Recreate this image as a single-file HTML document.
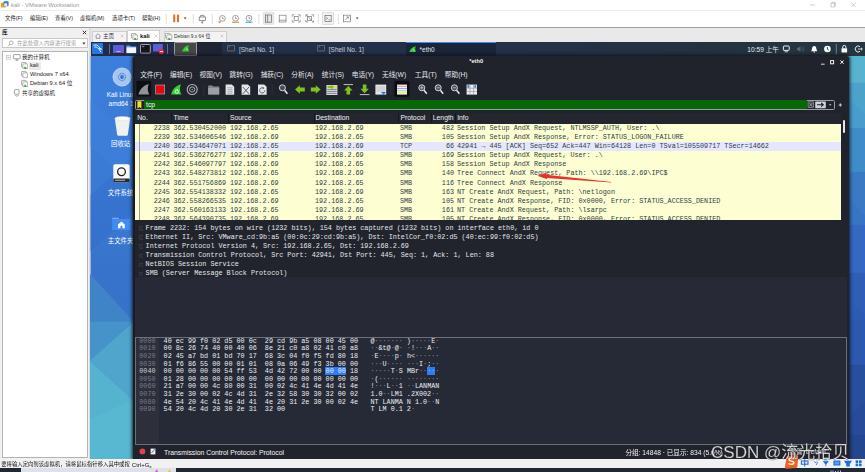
<!DOCTYPE html>
<html lang="zh"><head><meta charset="utf-8"><title>kali - VMware Workstation</title>
<style>
html,body{margin:0;padding:0;background:#fff;overflow:hidden;width:865px;height:472px;}
#root{position:relative;width:865px;height:472px;overflow:visible;background:#fff;font-family:"Liberation Sans","Noto Sans CJK SC",sans-serif;}
#root div,#root span,#root svg{position:absolute;box-sizing:border-box;}
.s{font-family:"Liberation Sans","Noto Sans CJK SC",sans-serif;white-space:pre;}
.m i{font-style:normal;opacity:0.5;}
.m{font-family:"Liberation Mono","Noto Sans CJK SC",monospace;white-space:pre;}
#root{filter:blur(0.45px);}
</style></head><body><div id="root">

<div style="left:0px;top:0px;width:865px;height:10.5px;background:#ffffff;"></div>
<svg style="left:1px;top:1px" width="8" height="8" viewBox="0 0 8 8"><rect x="0" y="1.5" width="5" height="5" rx="1" fill="#f59a23"/><rect x="2.6" y="0.3" width="5" height="5" rx="1" fill="#2d7fc1"/><rect x="3.2" y="2.2" width="3" height="3" rx="0.6" fill="#e8f0f8"/></svg>
<span class="s" style="left:11px;top:0.87px;font-size:5.9px;line-height:8.26px;color:#9a9a9a;">kali - VMware Workstation</span>
<svg style="left:805px;top:0" width="60" height="10" viewBox="0 0 60 10"><g stroke="#b0b0b0" stroke-width="0.6" fill="none"><path d="M5 5h5"/><rect x="26" y="3.2" width="3.4" height="3.8"/><path d="M27 3.2v-1h3.4v3.8h-1"/><path d="M46.5 2.6l4 4.4M50.5 2.6l-4 4.4"/></g></svg>
<div style="left:0px;top:10.3px;width:865px;height:0.6px;background:#ececec;"></div>
<div style="left:0px;top:11px;width:865px;height:16px;background:#ffffff;"></div>
<span class="s" style="left:5px;top:15.22px;font-size:5.4px;line-height:7.56px;color:#1a1a1a;">文件(F)</span>
<span class="s" style="left:30px;top:15.22px;font-size:5.4px;line-height:7.56px;color:#1a1a1a;">编辑(E)</span>
<span class="s" style="left:55px;top:15.22px;font-size:5.4px;line-height:7.56px;color:#1a1a1a;">查看(V)</span>
<span class="s" style="left:80px;top:15.22px;font-size:5.4px;line-height:7.56px;color:#1a1a1a;">虚拟机(M)</span>
<span class="s" style="left:112px;top:15.22px;font-size:5.4px;line-height:7.56px;color:#1a1a1a;">选项卡(T)</span>
<span class="s" style="left:142px;top:15.22px;font-size:5.4px;line-height:7.56px;color:#1a1a1a;">帮助(H)</span>
<svg style="left:160px;top:11px" width="210" height="16" viewBox="0 0 210 16">
<g fill="none" stroke-width="0.7">
<path d="M6.3 3v10M33.3 3v10M52.2 3v10M98.8 3v10M158.3 3v10M178.3 3v10" stroke="#d0d0d0"/>
<rect x="13.2" y="3.6" width="2" height="7.6" fill="#f26a21" stroke="none"/><rect x="17" y="3.6" width="2" height="7.6" fill="#f26a21" stroke="none"/>
<path d="M23.6 6.4h3l-1.5 1.8z" fill="#444" stroke="none"/>
<g stroke="#6a6a6a"><rect x="39.2" y="6" width="6.2" height="3.6"/><path d="M40.6 6v-1.6h3.4v1.6M42.3 9.6v2.4M41 11l1.3 1.2 1.3-1.2"/></g>
<g stroke="#7a7a7a"><circle cx="62.400" cy="7.400" r="2.900"/><path d="M62.400 5.800v1.800h1.400"/></g><path d="M58.600 10.600l2 .2-1.400 1.200z" fill="#f26a21" stroke="#f26a21" stroke-width="0.500"/>
<g stroke="#7a7a7a"><circle cx="75.5" cy="7.2" r="2.9"/><path d="M75.5 5.6v1.8h1.4"/></g><path d="M72 11.2h7" stroke="#f26a21" stroke-width="1"/>
<g stroke="#7a7a7a"><circle cx="89" cy="7.2" r="2.9"/><path d="M89 5.6v1.8h1.4"/></g><path d="M85.5 11.2h7" stroke="#1d9bd8" stroke-width="1"/>
<rect x="103.200" y="1.200" width="10.600" height="12.200" rx="0.800" fill="#e6e6e6" stroke="#d4d4d4" stroke-width="0.500"/>
<g stroke="#6a6a6a"><rect x="105.400" y="4" width="6.200" height="7.200"/><path d="M107.600 4v7.200"/></g>
<g stroke="#7a7a7a" transform="translate(1.200,0)"><rect x="118" y="4.200" width="6.800" height="6.800"/><path d="M118 9.200h6.800"/></g>
<g stroke="#7a7a7a" transform="translate(1.400,0)"><rect x="132.800" y="5.400" width="4" height="4"/><path d="M130.800 5.800v-2h2.200M138.800 5.800v-2h-2.200M130.800 9v2h2.200M138.800 9v2h-2.200"/></g>
<g stroke="#7a7a7a" transform="translate(1.200,0)"><rect x="146.400" y="5.400" width="4" height="4"/><path d="M145 3.800l7 7.400"/><path d="M144.600 5.800v-2h2.200M152.400 5.800v-2h-2.200M144.600 9v2h2.200M152.400 9.600v1.400h-1.400"/></g>
<rect x="162.6" y="1.6" width="11" height="12" fill="#f2f2f2" stroke="#c8c8c8" stroke-width="0.5"/>
<g stroke="#6a6a6a"><rect x="165" y="4.4" width="6.2" height="6"/><path d="M166.2 6.4l1.4 1-1.4 1M168.6 8.8h1.6"/></g>
<g stroke="#7a7a7a"><rect x="183.4" y="4.2" width="7" height="6.6"/><path d="M185.4 8.8l3-3M186.6 5.8h1.8v1.8"/></g>
<path d="M195.800 6.600h2.800l-1.400 1.700z" fill="#444" stroke="none"/>
</g></svg>
<div style="left:-6px;top:26.6px;width:880px;height:0.9px;background:#9c9c9c;"></div>
<div style="left:-6px;top:27.5px;width:880px;height:14.5px;background:#e9e9e9;"></div>
<div style="left:-6px;top:27.5px;width:94.6px;height:432px;background:#f0f0f0;"></div>
<div style="left:88.6px;top:27.5px;width:2.1px;height:432px;background:#dcdcdc;"></div>
<span class="s" style="left:2px;top:28.68px;font-size:5.6px;line-height:7.84px;color:#222;font-weight:bold;">库</span>
<svg style="left:81.5px;top:30px" width="5" height="5" viewBox="0 0 5 5"><path d="M0.8 0.8l3.4 3.4M4.2 0.8l-3.4 3.4" stroke="#222" stroke-width="0.9" fill="none"/></svg>
<div style="left:2.3px;top:38.4px;width:85.4px;height:9.6px;background:#ffffff;border:0.6px solid #c8c8c8;"></div>
<svg style="left:6.5px;top:40px" width="7" height="7" viewBox="0 0 7 7"><circle cx="4.2" cy="2.8" r="1.9" fill="none" stroke="#8a8a8a" stroke-width="0.6"/><path d="M2.8 4.2L0.8 6.3" stroke="#8a8a8a" stroke-width="0.7"/></svg>
<span class="s" style="left:17px;top:39.52px;font-size:5.4px;line-height:7.56px;color:#a0a0a0;">在此处键入内容进行搜索</span>
<svg style="left:82px;top:42px" width="4" height="3" viewBox="0 0 4 3"><path d="M0.3 0.4h3.2l-1.6 2z" fill="#333"/></svg>
<div style="left:2.2px;top:51.2px;width:85.5px;height:406.8px;background:#ffffff;border:0.7px solid #b4b4b4;"></div>
<svg style="left:5.5px;top:54.5px" width="5" height="5" viewBox="0 0 5 5"><rect x="0.4" y="0.4" width="4" height="4" fill="#fff" stroke="#aaa" stroke-width="0.5"/><path d="M1.3 2.4h2.2" stroke="#555" stroke-width="0.5"/></svg>
<svg style="left:12.5px;top:53.5px" width="8" height="7" viewBox="0 0 8 7"><rect x="0.6" y="0.6" width="6.6" height="4.2" rx="0.5" fill="#fff" stroke="#666" stroke-width="0.6"/><path d="M2.4 6.2h3M3.9 4.8v1.4" stroke="#666" stroke-width="0.6"/></svg>
<span class="s" style="left:22px;top:53.85px;font-size:5.5px;line-height:7.7px;color:#222;">我的计算机</span>
<div style="left:29.2px;top:61.8px;width:11.6px;height:8.2px;background:#ececec;"></div>
<svg style="left:20.6px;top:61.8px" width="7.5" height="7.5" viewBox="0 0 7.5 7.5"><rect x="0.5" y="0.5" width="4.6" height="4.6" rx="0.4" fill="#fff" stroke="#777" stroke-width="0.55"/><rect x="1.9" y="1.9" width="4.8" height="4.8" rx="0.4" fill="#fff" stroke="#777" stroke-width="0.55"/><path d="M3.4 4.6l2.6 1.4-2.6 1.4z" fill="#1fa81f"/></svg>
<span class="s" style="left:30px;top:62.11px;font-size:5.7px;line-height:7.98px;color:#222;">kali</span>
<svg style="left:20.6px;top:70.8px" width="7.5" height="7.5" viewBox="0 0 7.5 7.5"><rect x="0.5" y="0.5" width="4.6" height="4.6" rx="0.4" fill="#fff" stroke="#777" stroke-width="0.55"/><rect x="1.9" y="1.9" width="4.8" height="4.8" rx="0.4" fill="#fff" stroke="#777" stroke-width="0.55"/></svg>
<span class="s" style="left:30px;top:71.21px;font-size:5.7px;line-height:7.98px;color:#222;">Windows 7 x64</span>
<svg style="left:20.6px;top:79.8px" width="7.5" height="7.5" viewBox="0 0 7.5 7.5"><rect x="0.5" y="0.5" width="4.6" height="4.6" rx="0.4" fill="#fff" stroke="#777" stroke-width="0.55"/><rect x="1.9" y="1.9" width="4.8" height="4.8" rx="0.4" fill="#fff" stroke="#777" stroke-width="0.55"/><path d="M3.4 4.6l2.6 1.4-2.6 1.4z" fill="#1fa81f"/></svg>
<span class="s" style="left:30px;top:80.21px;font-size:5.7px;line-height:7.98px;color:#222;">Debian 9.x 64 位</span>
<svg style="left:12.5px;top:88.8px" width="8" height="8" viewBox="0 0 8 8"><rect x="1.4" y="0.6" width="4.6" height="4.6" rx="0.8" fill="#fff" stroke="#666" stroke-width="0.6"/><path d="M2.2 6.2c0 1 2.6 1.2 3.6 0" stroke="#666" stroke-width="0.6" fill="none"/></svg>
<span class="s" style="left:22px;top:89.65px;font-size:5.5px;line-height:7.7px;color:#222;">共享的虚拟机</span>
<div style="left:92.3px;top:30.8px;width:34.4px;height:11.2px;background:#f3f3f3;border:0.6px solid #cfcfcf;border-bottom:none;"></div>
<svg style="left:95px;top:33px" width="6" height="6" viewBox="0 0 6 6"><path d="M0.5 3L3 0.7 5.5 3M1.2 2.6v2.8h3.6V2.6" fill="none" stroke="#666" stroke-width="0.6"/></svg>
<span class="s" style="left:103px;top:33.18px;font-size:5.6px;line-height:7.84px;color:#333;">主页</span>
<svg style="left:119.5px;top:34.4px" width="4" height="4" viewBox="0 0 4 4"><path d="M0.5 0.5l3 3M3.5 0.5l-3 3" stroke="#b8b8b8" stroke-width="0.6" fill="none"/></svg>
<div style="left:127px;top:30px;width:33.2px;height:12px;background:#ffffff;border:0.6px solid #cfcfcf;border-bottom:none;"></div>
<svg style="left:130.6px;top:32.8px" width="7.5" height="7.5" viewBox="0 0 7.5 7.5"><rect x="0.5" y="0.5" width="4.6" height="4.6" rx="0.4" fill="#fff" stroke="#777" stroke-width="0.55"/><rect x="1.9" y="1.9" width="4.8" height="4.8" rx="0.4" fill="#fff" stroke="#777" stroke-width="0.55"/><path d="M3.4 4.6l2.6 1.4-2.6 1.4z" fill="#1fa81f"/></svg>
<span class="s" style="left:140px;top:32.34px;font-size:5.8px;line-height:8.12px;color:#111;font-weight:bold;">kali</span>
<svg style="left:153.6px;top:34.4px" width="4" height="4" viewBox="0 0 4 4"><path d="M0.5 0.5l3 3M3.5 0.5l-3 3" stroke="#b8b8b8" stroke-width="0.6" fill="none"/></svg>
<div style="left:163.8px;top:30.8px;width:62.8px;height:11.2px;background:#f3f3f3;border:0.6px solid #cfcfcf;border-bottom:none;"></div>
<svg style="left:165.2px;top:32.8px" width="7.5" height="7.5" viewBox="0 0 7.5 7.5"><rect x="0.5" y="0.5" width="4.6" height="4.6" rx="0.4" fill="#fff" stroke="#777" stroke-width="0.55"/><rect x="1.9" y="1.9" width="4.8" height="4.8" rx="0.4" fill="#fff" stroke="#777" stroke-width="0.55"/><path d="M3.4 4.6l2.6 1.4-2.6 1.4z" fill="#1fa81f"/></svg>
<span class="s" style="left:174.2px;top:32.98px;font-size:5.6px;line-height:7.84px;color:#333;transform:scaleX(0.87);transform-origin:0 50%;">Debian 9.x 64 位</span>
<svg style="left:219.6px;top:34.4px" width="4" height="4" viewBox="0 0 4 4"><path d="M0.5 0.5l3 3M3.5 0.5l-3 3" stroke="#b8b8b8" stroke-width="0.6" fill="none"/></svg>
<div style="left:90.6px;top:42px;width:774.4px;height:14.2px;background:#1f2435;"></div>
<div style="left:90.6px;top:42px;width:106.4px;height:14.2px;background:#222c48;"></div>
<div style="left:222px;top:42px;width:184.4px;height:14.2px;background:#233049;"></div>
<div style="left:406.4px;top:42px;width:90px;height:14.2px;background:#1b2438;border-top:1.6px solid #3b8eea;"></div>
<div style="left:496.4px;top:42px;width:374.6px;height:14.2px;background:linear-gradient(90deg,#233049 0%,#24323f 60%,#26363f 100%);"></div>
<svg style="left:91.8px;top:42.8px" width="11.2" height="11.4" viewBox="0 0 11.2 11.4"><rect width="11.2" height="11.4" rx="1" fill="#2577e6"/><path d="M1.6 2.4c2-.9 4.4-.2 5.4 1.4.9 1.5 1.6 2 2.6 2.4-1.2.2-2.4-.4-3-1.2.4 1.2 1.2 2.6 2.4 4.2M2.4 4.2c1.4-.6 3 .2 3.6 1.2" fill="none" stroke="#fff" stroke-width="0.9"/></svg>
<div style="left:109px;top:44px;width:0.7px;height:10.4px;background:#6a7080;"></div>
<svg style="left:112.6px;top:44.6px" width="11" height="9" viewBox="0 0 11 9"><defs><linearGradient id="g1" x1="0" y1="0" x2="1" y2="1"><stop offset="0" stop-color="#3a6be0"/><stop offset="1" stop-color="#8a4bd0"/></linearGradient></defs><rect width="11" height="8" rx="0.6" fill="url(#g1)"/><rect x="3.5" y="6.2" width="4" height="0.7" fill="#cfd6f5"/></svg>
<svg style="left:126.4px;top:44.2px" width="10.6" height="9.6" viewBox="0 0 10.6 9.6"><path d="M0.3 1.6h3.6l1 1h5.4v6.6h-10z" fill="#5aa2f0"/><rect x="0.6" y="3.4" width="9.4" height="5.6" fill="#f4f6fa"/></svg>
<svg style="left:139.8px;top:44.2px" width="10.8" height="9.6" viewBox="0 0 10.8 9.6"><rect x="0.5" y="0.5" width="9.8" height="8.6" rx="0.8" fill="#14161c" stroke="#c8c8c8" stroke-width="0.8"/><path d="M2 2.6h2.4" stroke="#ddd" stroke-width="0.6"/></svg>
<svg style="left:153.2px;top:44.2px" width="11.4" height="10.6" viewBox="0 0 11.4 10.6"><rect width="9.8" height="7.6" rx="0.6" fill="url(#g1)"/><circle cx="8.4" cy="7.6" r="2.7" fill="#e8252c"/><rect x="6.8" y="7.1" width="3.2" height="1" fill="#fff"/></svg>
<div style="left:167.4px;top:44px;width:0.7px;height:10.4px;background:#6a7080;"></div>
<div style="left:174.2px;top:42.2px;width:22.8px;height:13.4px;background:#474747;border:0.7px solid #9c9c9c;border-radius:1px;"></div>
<svg style="left:181.6px;top:45.4px" width="7.4" height="6.6" viewBox="0 0 10 9"><path d="M0.2 8.8C1.2 4.4 4.4 1 9.4 0.2 8 2.6 8.2 6 9.8 8.8z" fill="#2ed12e"/><path d="M5.2 6.4l1.4-1.4 1.2 1.6" stroke="#e8ffe8" stroke-width="0.9" fill="none"/></svg>
<svg style="left:227px;top:45.4px" width="8" height="6.4" viewBox="0 0 8 6.4"><rect x="0.4" y="0.4" width="7.2" height="5.6" rx="0.5" fill="#2a3040" stroke="#7d8596" stroke-width="0.7"/><path d="M1.6 2h1.6" stroke="#aab" stroke-width="0.5"/></svg>
<span class="s" style="left:239px;top:44.98px;font-size:6.45px;line-height:9.03px;color:#ccd0d8;">[Shell No. 1]</span>
<svg style="left:317.4px;top:45.4px" width="8" height="6.4" viewBox="0 0 8 6.4"><rect x="0.4" y="0.4" width="7.2" height="5.6" rx="0.5" fill="#2a3040" stroke="#7d8596" stroke-width="0.7"/><path d="M1.6 2h1.6" stroke="#aab" stroke-width="0.5"/></svg>
<span class="s" style="left:328.8px;top:44.98px;font-size:6.45px;line-height:9.03px;color:#ccd0d8;">[Shell No. 1]</span>
<svg style="left:408.6px;top:45.6px" width="7.4" height="6.4" viewBox="0 0 10 9"><path d="M0.2 8.8C1.2 4.4 4.4 1 9.4 0.2 8 2.6 8.2 6 9.8 8.8z" fill="#2ed12e"/><path d="M5.2 6.4l1.4-1.4 1.2 1.6" stroke="#e8ffe8" stroke-width="0.9" fill="none"/></svg>
<span class="s" style="left:419.6px;top:44.98px;font-size:6.45px;line-height:9.03px;color:#e4e8f0;">*eth0</span>
<span class="s" style="left:747.3px;top:44.78px;font-size:6.6px;line-height:9.24px;color:#e8ecf0;">10:59 上午</span>
<svg style="left:780px;top:43px" width="85" height="12" viewBox="0 0 85 12">
<rect x="3.4" y="3" width="5.8" height="4.4" rx="0.6" fill="none" stroke="#f0f0f0" stroke-width="1"/><path d="M4.6 8.8h3.4" stroke="#f0f0f0" stroke-width="0.8"/>
<path d="M17.2 4.8h1.4l1.8-1.6v5.6l-1.8-1.6h-1.4z" fill="#5d6a74"/><path d="M21.6 4.2c.8 1 .8 2.6 0 3.600M22.800 3.200c1.400 1.600 1.400 4 0 5.600" fill="none" stroke="#5d6a74" stroke-width="0.5"/>
<path d="M31.200 8.200c1-1 .6-3.600 1.600-4.600.8-.8 2-.8 2.800 0 1 1 .6 3.600 1.600 4.600z" fill="#fff"/><circle cx="34.200" cy="9" r="0.700" fill="#fff"/>
<circle cx="47.400" cy="6" r="3.300" fill="#fff"/><path d="M47.400 4v2.200l1.500 1" stroke="#24333f" stroke-width="0.9" fill="none"/>
<path d="M56.300 1v10.400" stroke="#9aa4ae" stroke-width="0.700"/>
<rect x="61.500" y="5.200" width="5.600" height="4.200" rx="0.500" fill="#fff"/><path d="M62.700 5.200v-1.200a1.600 1.600 0 0 1 3.200 0v1.200" fill="none" stroke="#fff" stroke-width="0.900"/>
<path d="M80 3.600a3 3 0 1 0 0 4.800" fill="none" stroke="#fff" stroke-width="0.9"/><path d="M78 6h4.200M81 4.800l1.300 1.200-1.300 1.200" stroke="#fff" stroke-width="0.8" fill="none"/>
</svg>
<svg style="left:90.200px;top:56.200px" width="780.800" height="403" viewBox="90.200 56.200 780.800 403" preserveAspectRatio="none">
<defs>
<linearGradient id="dl" x1="0" y1="0" x2="0" y2="1"><stop offset="0" stop-color="#3b7fda"/><stop offset="0.400" stop-color="#3a79d3"/><stop offset="0.520" stop-color="#3773ca"/><stop offset="1" stop-color="#3670c6"/></linearGradient>
</defs>
<rect x="90.600" y="56" width="60" height="404" fill="url(#dl)"/><rect x="88" y="56" width="2.600" height="404" fill="#dcdcdc"/>
<path d="M90 100l44 40v46l-44-40z" fill="#4585e0" opacity="0.300"/>
<path d="M90 196l44-40v56l-44 40z" fill="#2f68c2" opacity="0.300"/>
<path d="M90 274L134 322V460H90z" fill="#4084c8"/>
<path d="M90 322H134L90 361z" fill="#4692ca"/>
<path d="M134 322V401L90 361z" fill="#4fa5cc"/>
<path d="M90 361L134 401V460H90z" fill="#56b3cf"/>
<path d="M90 420L134 400V460H90z" fill="#5abad1" opacity="0.700"/>
<rect x="840" y="56" width="32" height="27" fill="#56b4cf"/>
<rect x="840" y="82.500" width="32" height="46" fill="#4ba3cc"/>
<rect x="840" y="128" width="32" height="45" fill="#3f8cc8"/>
<rect x="840" y="172" width="32" height="54" fill="#3a7ac4"/>
<rect x="840" y="225" width="32" height="49" fill="#3468c2"/>
<rect x="840" y="273" width="32" height="48" fill="#2f5eb6"/>
<rect x="840" y="320" width="32" height="46" fill="#2c58b0"/>
<rect x="840" y="365" width="32" height="71" fill="#284f9e"/>
<rect x="840" y="435" width="32" height="25" fill="#24468e"/>
<path d="M849 100l16 14v14h-16z" fill="#4797ca" opacity="0.600"/>
<path d="M849 200l16 16v9h-16z" fill="#3570c3" opacity="0.600"/>
<path d="M849 300l16 14v6h-16z" fill="#2d5ab2" opacity="0.600"/>
<path d="M849 418l16-16v33h-16z" fill="#264a96" opacity="0.600"/>
</svg>
<svg style="left:111.800px;top:66.600px" width="20" height="20" viewBox="0 0 20 20"><circle cx="10" cy="10" r="9.300" fill="#a6c6f2"/><circle cx="10" cy="10" r="9" fill="none" stroke="#bdd5f6" stroke-width="0.700"/><circle cx="10" cy="10" r="4.400" fill="#9abdee"/><circle cx="10" cy="10" r="3.600" fill="none" stroke="#4a78c4" stroke-width="0.900" stroke-dasharray="1.600 0.800"/><circle cx="10" cy="10" r="1.900" fill="#3a74d8"/></svg>
<span class="s" style="left:106.8px;top:91.22px;font-size:6.4px;line-height:8.96px;color:#ffffff;">Kali Linux</span>
<span class="s" style="left:108.6px;top:100.32px;font-size:6.4px;line-height:8.96px;color:#ffffff;">amd64 1</span>
<svg style="left:113.500px;top:116px" width="17" height="20" viewBox="0 0 17 20"><path d="M0.800 2.400h15.400l-2.400 16.400c-.2.800-.8 1-1.400 1h-7.800c-.6 0-1.200-.2-1.400-1z" fill="#eef0f2"/><ellipse cx="8.500" cy="2.600" rx="7.700" ry="2.200" fill="#fafbfc" stroke="#d4d8dc" stroke-width="0.500"/></svg>
<span class="s" style="left:111px;top:140.22px;font-size:6.4px;line-height:8.96px;color:#ffffff;">回收站</span>
<svg style="left:113.200px;top:164.400px" width="17" height="18.600" viewBox="0 0 17 18.600"><rect x="0.300" y="0.300" width="16.400" height="18" rx="1.600" fill="#fbfbfb"/><rect x="0.300" y="14.600" width="16.400" height="3.700" rx="1" fill="#2a2c30"/><circle cx="8.500" cy="7.800" r="3.900" fill="none" stroke="#222" stroke-width="1.300"/><rect x="2" y="15.800" width="10" height="0.800" fill="#ddd"/></svg>
<span class="s" style="left:107.8px;top:188.72px;font-size:6.4px;line-height:8.96px;color:#ffffff;">文件系统</span>
<svg style="left:112px;top:216.600px" width="18.800" height="13.600" viewBox="0 0 18.800 13.600"><path d="M0.200 0.800h6l1 1.200h11.400v11.400h-18.400z" fill="#3f8cf3"/><path d="M0.200 0.800h6l1 1.200h-7z" fill="#6aa8f8"/><path d="M9.400 4.400l3.400 3v3.800h-2.400v-2.400h-2v2.400h-2.400v-3.800z" fill="#fff"/></svg>
<span class="s" style="left:107.8px;top:237.32px;font-size:6.4px;line-height:8.96px;color:#ffffff;">主文件夹</span>
<div style="left:132.8px;top:56.2px;width:716.0px;height:402.8px;background:#20232c;border-radius:3px 3px 0 0;box-shadow:0 0 3.5px 0.8px rgba(10,14,24,0.85);"></div>
<div style="left:132.8px;top:58px;width:2.3px;height:401px;background:#1b1c21;"></div>
<span class="s" style="left:469.2px;top:58.41px;font-size:5.7px;line-height:7.98px;color:#f0f0f0;font-weight:bold;">*eth0</span>
<svg style="left:818px;top:58px" width="30" height="8" viewBox="0 0 30 8"><g stroke="#f4f4f4" fill="none"><path d="M3 6.200h3.600" stroke-width="0.900"/><rect x="12.600" y="2.600" width="3" height="3.200" stroke-width="1"/><path d="M22.400 2.400l3.200 3.400M25.600 2.400l-3.200 3.400" stroke-width="1"/></g></svg>
<span class="s" style="left:140.2px;top:70.11px;font-size:6.7px;line-height:9.38px;color:#e8e8ec;">文件(F)</span>
<span class="s" style="left:170px;top:70.11px;font-size:6.7px;line-height:9.38px;color:#e8e8ec;">编辑(E)</span>
<span class="s" style="left:199.6px;top:70.11px;font-size:6.7px;line-height:9.38px;color:#e8e8ec;">视图(V)</span>
<span class="s" style="left:229.6px;top:70.11px;font-size:6.7px;line-height:9.38px;color:#e8e8ec;">跳转(G)</span>
<span class="s" style="left:260.7px;top:70.11px;font-size:6.7px;line-height:9.38px;color:#e8e8ec;">捕获(C)</span>
<span class="s" style="left:291.3px;top:70.11px;font-size:6.7px;line-height:9.38px;color:#e8e8ec;">分析(A)</span>
<span class="s" style="left:321.8px;top:70.11px;font-size:6.7px;line-height:9.38px;color:#e8e8ec;">统计(S)</span>
<span class="s" style="left:351.8px;top:70.11px;font-size:6.7px;line-height:9.38px;color:#e8e8ec;">电话(Y)</span>
<span class="s" style="left:382px;top:70.11px;font-size:6.7px;line-height:9.38px;color:#e8e8ec;">无线(W)</span>
<span class="s" style="left:414.8px;top:70.11px;font-size:6.7px;line-height:9.38px;color:#e8e8ec;">工具(T)</span>
<span class="s" style="left:444.8px;top:70.11px;font-size:6.7px;line-height:9.38px;color:#e8e8ec;">帮助(H)</span>
<svg style="left:134px;top:80px" width="350" height="18" viewBox="0 -2 350 18">
<rect x="2.400" y="-1.200" width="14.800" height="15.600" rx="1.400" fill="#0d0e12"/>
<path d="M4.400 12.600C5.800 7.600 9 3.400 14.800 2 13.200 5.200 13.400 9.400 15.400 12.600z" fill="#8f9297"/>
<rect x="21.700" y="3" width="9" height="9" fill="#e00a12" stroke="#b8babd" stroke-width="0.600"/>
<path d="M37.200 12.600C38.200 7.400 41.400 3.600 47 2.400 45.400 5.400 45.600 9.400 47.600 12.600z" fill="#2fd32f"/><circle cx="42.800" cy="9.600" r="1.700" fill="none" stroke="#f0fff0" stroke-width="0.900"/><path d="M42.800 6.800v2l1.400-1z" fill="#f0fff0"/>
<circle cx="58.200" cy="7.500" r="5" fill="none" stroke="#b4b6ba" stroke-width="1.100"/><circle cx="58.200" cy="7.500" r="2.600" fill="none" stroke="#b4b6ba" stroke-width="1"/><circle cx="58.200" cy="7.500" r="0.700" fill="#b4b6ba"/>
<path d="M69.600 2v11" stroke="#343741" stroke-width="0.600"/>
<path d="M74.200 3.400h4l1 1.200h6v7.800h-11z" fill="#85888d"/><rect x="74.200" y="6" width="11" height="6.400" fill="#9c9fa4"/>
<path d="M91.600 2.400h6.200l2.400 2.400v8h-8.600z" fill="#e4e5e7"/><path d="M92.800 5.600h6M92.800 7.600h6M92.800 9.600h6M92.800 11.400h6M95 5.600v6M97.200 5.600v6" stroke="#9a9da2" stroke-width="0.500"/>
<path d="M107.600 2.400h6.200l2.400 2.400v8h-8.600z" fill="#e4e5e7"/><path d="M108.800 5l6.200 6.800M115 5l-6.200 6.800" stroke="#4d5056" stroke-width="0.900"/>
<path d="M124 2.400h6.200l2.400 2.400v8h-8.600z" fill="#e4e5e7"/><path d="M130.800 8.400a2.600 2.600 0 1 1-1.200-2.200" fill="none" stroke="#5a5d63" stroke-width="1"/><path d="M128.600 4.800l1.800 1.200-1.600 1.200z" fill="#5a5d63"/>
<path d="M138.200 2v11" stroke="#343741" stroke-width="0.600"/>
<circle cx="148.400" cy="5.800" r="3" fill="#4a4d55" stroke="#d4d6da" stroke-width="1"/><path d="M150.600 8.200l2.800 3.600" stroke="#e8e8e8" stroke-width="1.500"/>
<path d="M161 7.500l4.800-4.200v2.300h5v3.800h-5v2.300z" fill="#7fc21f"/>
<path d="M186.600 7.500l-4.800-4.200v2.300h-5v3.800h5v2.300z" fill="#7fc21f"/>
<rect x="192.400" y="3" width="11" height="10" fill="#d4d6da"/><path d="M193.200 7.400h9.400M193.200 9.400h9.400M193.200 11.400h9.400" stroke="#5d6066" stroke-width="0.700"/><path d="M200.200 5l-3.200-2.600v1.500h-3.400v2.200h3.400v1.500z" fill="#7fc21f"/><rect x="200.600" y="4" width="2.400" height="1.600" fill="#f2d21a"/>
<path d="M209.600 2.600h9.400" stroke="#d0d2d6" stroke-width="0.900"/><path d="M214.300 4l4.200 4.400h-2.400v4.200h-3.600v-4.200h-2.400z" fill="#7fc21f"/>
<path d="M225.800 12.600h9.600" stroke="#d0d2d6" stroke-width="0.900"/><path d="M230.600 11.200l4.200-4.400h-2.400v-4.200h-3.600v4.200h-2.400z" fill="#7fc21f"/>
<rect x="241.400" y="2.600" width="10.800" height="10" fill="#e4e6e9"/><path d="M242.400 5h8.800M242.400 7h8.800M242.400 9h8.800" stroke="#a4a7ad" stroke-width="0.600"/><path d="M247 10h5l-2.500 3z" fill="#2c78e4"/>
<path d="M257 2v11" stroke="#343741" stroke-width="0.600"/>
<rect x="260.400" y="-1.200" width="15" height="16" rx="1.400" fill="#0b0c10"/>
<rect x="263" y="2.600" width="10" height="10" fill="#f4f4f4"/><path d="M263 4.300h10" stroke="#f08cc0" stroke-width="1.100"/><path d="M263 6.500h10" stroke="#8fa8f0" stroke-width="1.100"/><path d="M263 8.700h10" stroke="#9fe08a" stroke-width="1.100"/><path d="M263 10.900h10" stroke="#f2e27a" stroke-width="1.100"/>
<g fill="#4a4d55" stroke="#d4d6da" stroke-width="1"><circle cx="287.800" cy="5.800" r="3"/><circle cx="304.200" cy="5.800" r="3"/><circle cx="320.400" cy="5.800" r="3"/></g>
<g stroke="#e8e8e8" stroke-width="1.500"><path d="M290 8.200l2.800 3.600M306.400 8.200l2.800 3.600M322.600 8.200l2.800 3.600"/></g>
<g stroke="#e0e0e0" stroke-width="0.700"><path d="M286.200 5.800h3.200M287.800 4.200v3.200M302.600 5.800h3.200M318.800 5.800h3.200"/></g>
<rect x="332.600" y="2.600" width="10.400" height="10" fill="#eceef0"/><path d="M336 2.600v10M339.600 2.600v10M332.600 6.200h10.400M332.600 9.400h10.400" stroke="#8a8d93" stroke-width="0.600"/><path d="M333.400 3.200h1.800v2.600h-1.800zM340.400 3.200h1.800v2.600h-1.800z" fill="#2c78e4"/>
</svg>
<div style="left:135.2px;top:99.5px;width:699.6px;height:10.5px;background:#20232c;border:0.7px solid #9a9da3;border-radius:1.500px;"></div>
<div style="left:143.8px;top:100.2px;width:663.2px;height:9.1px;background:#066906;"></div>
<svg style="left:137.200px;top:100.800px" width="5" height="8" viewBox="0 0 5 8"><path d="M0.400 0.300h4v7.200l-2-1.600-2 1.600z" fill="#f4e21a"/></svg>
<span class="s" style="left:146.1px;top:100.18px;font-size:6.6px;line-height:9.24px;color:#ffffff;">tcp</span>
<svg style="left:806.600px;top:100px" width="44" height="10" viewBox="0 0 44 10">
<rect x="1" y="1.800" width="5.600" height="5.800" fill="#3c3f48" stroke="#a8abb0" stroke-width="0.600"/><path d="M2.200 3l3.200 3.400M5.400 3l-3.200 3.400" stroke="#c8cace" stroke-width="0.600"/>
<rect x="8.200" y="1.400" width="10.600" height="6.800" rx="0.600" fill="#cfd2d8"/><path d="M10 4.800h5.600M14.200 3l2 1.800-2 1.800" stroke="#1c1e26" stroke-width="1.100" fill="none"/>
<path d="M22 4.200h2.400l-1.200 1.600z" fill="#d8d8d8"/>
<path d="M31.600 5h3.400M33.300 3.300v3.400" stroke="#e8e8e8" stroke-width="0.800"/>
</svg>
<div style="left:135.2px;top:112.6px;width:705.4px;height:11.4px;background:#23262f;"></div>
<span class="s" style="left:137.2px;top:113.34px;font-size:6.8px;line-height:9.52px;color:#f0f0f2;">No.</span>
<span class="s" style="left:173.6px;top:113.34px;font-size:6.8px;line-height:9.52px;color:#f0f0f2;">Time</span>
<span class="s" style="left:230px;top:113.34px;font-size:6.8px;line-height:9.52px;color:#f0f0f2;">Source</span>
<span class="s" style="left:315.4px;top:113.34px;font-size:6.8px;line-height:9.52px;color:#f0f0f2;">Destination</span>
<span class="s" style="left:400.4px;top:113.34px;font-size:6.8px;line-height:9.52px;color:#f0f0f2;">Protocol</span>
<span class="s" style="left:432.8px;top:113.34px;font-size:6.8px;line-height:9.52px;color:#f0f0f2;">Length</span>
<span class="s" style="left:457.2px;top:113.34px;font-size:6.8px;line-height:9.52px;color:#f0f0f2;">Info</span>
<div style="left:171px;top:113px;width:0.7px;height:10.4px;background:#15171d;"></div>
<div style="left:228px;top:113px;width:0.7px;height:10.4px;background:#15171d;"></div>
<div style="left:313.5px;top:113px;width:0.7px;height:10.4px;background:#15171d;"></div>
<div style="left:398.2px;top:113px;width:0.7px;height:10.4px;background:#15171d;"></div>
<div style="left:431px;top:113px;width:0.7px;height:10.4px;background:#15171d;"></div>
<div style="left:455.2px;top:113px;width:0.7px;height:10.4px;background:#15171d;"></div>
<div style="left:135.2px;top:123.8px;width:705.4px;height:96.00px;overflow:hidden;background:#fdfed2;">
<div style="left:0;top:0.00px;width:705.4px;height:9.14px;background:#fdfed2;">
<span class="m" style="right:670.70px;top:0.5px;font-size:6.75px;line-height:9.04px;color:#2c3e44;">2238</span>
<span class="m" style="left:38.20px;top:0.5px;font-size:6.75px;line-height:9.04px;color:#2c3e44;">362.530452000</span>
<span class="m" style="left:94.80px;top:0.5px;font-size:6.75px;line-height:9.04px;color:#2c3e44;">192.168.2.65</span>
<span class="m" style="left:179.80px;top:0.5px;font-size:6.75px;line-height:9.04px;color:#2c3e44;">192.168.2.69</span>
<span class="m" style="left:264.80px;top:0.5px;font-size:6.75px;line-height:9.04px;color:#2c3e44;">SMB</span>
<span class="m" style="right:386.60px;top:0.5px;font-size:6.75px;line-height:9.04px;color:#2c3e44;">482</span>
<span class="m" style="left:321.80px;top:0.5px;font-size:6.75px;line-height:9.04px;color:#2c3e44;">Session Setup AndX Request, NTLMSSP_AUTH, User: .\</span>
</div>
<div style="left:0;top:9.04px;width:705.4px;height:9.14px;background:#fdfed2;">
<span class="m" style="right:670.70px;top:0.5px;font-size:6.75px;line-height:9.04px;color:#2c3e44;">2239</span>
<span class="m" style="left:38.20px;top:0.5px;font-size:6.75px;line-height:9.04px;color:#2c3e44;">362.534606546</span>
<span class="m" style="left:94.80px;top:0.5px;font-size:6.75px;line-height:9.04px;color:#2c3e44;">192.168.2.69</span>
<span class="m" style="left:179.80px;top:0.5px;font-size:6.75px;line-height:9.04px;color:#2c3e44;">192.168.2.65</span>
<span class="m" style="left:264.80px;top:0.5px;font-size:6.75px;line-height:9.04px;color:#2c3e44;">SMB</span>
<span class="m" style="right:386.60px;top:0.5px;font-size:6.75px;line-height:9.04px;color:#2c3e44;">105</span>
<span class="m" style="left:321.80px;top:0.5px;font-size:6.75px;line-height:9.04px;color:#2c3e44;">Session Setup AndX Response, Error: STATUS_LOGON_FAILURE</span>
</div>
<div style="left:0;top:18.08px;width:705.4px;height:9.14px;background:#e7e6ff;">
<span class="m" style="right:670.70px;top:0.5px;font-size:6.75px;line-height:9.04px;color:#2c3e44;">2240</span>
<span class="m" style="left:38.20px;top:0.5px;font-size:6.75px;line-height:9.04px;color:#2c3e44;">362.534647071</span>
<span class="m" style="left:94.80px;top:0.5px;font-size:6.75px;line-height:9.04px;color:#2c3e44;">192.168.2.65</span>
<span class="m" style="left:179.80px;top:0.5px;font-size:6.75px;line-height:9.04px;color:#2c3e44;">192.168.2.69</span>
<span class="m" style="left:264.80px;top:0.5px;font-size:6.75px;line-height:9.04px;color:#2c3e44;">TCP</span>
<span class="m" style="right:386.60px;top:0.5px;font-size:6.75px;line-height:9.04px;color:#2c3e44;">66</span>
<span class="m" style="left:321.80px;top:0.5px;font-size:6.75px;line-height:9.04px;color:#2c3e44;">42941 → 445 [ACK] Seq=652 Ack=447 Win=64128 Len=0 TSval=105509717 TSecr=14662</span>
</div>
<div style="left:0;top:27.12px;width:705.4px;height:9.14px;background:#fdfed2;">
<span class="m" style="right:670.70px;top:0.5px;font-size:6.75px;line-height:9.04px;color:#2c3e44;">2241</span>
<span class="m" style="left:38.20px;top:0.5px;font-size:6.75px;line-height:9.04px;color:#2c3e44;">362.536276277</span>
<span class="m" style="left:94.80px;top:0.5px;font-size:6.75px;line-height:9.04px;color:#2c3e44;">192.168.2.65</span>
<span class="m" style="left:179.80px;top:0.5px;font-size:6.75px;line-height:9.04px;color:#2c3e44;">192.168.2.69</span>
<span class="m" style="left:264.80px;top:0.5px;font-size:6.75px;line-height:9.04px;color:#2c3e44;">SMB</span>
<span class="m" style="right:386.60px;top:0.5px;font-size:6.75px;line-height:9.04px;color:#2c3e44;">169</span>
<span class="m" style="left:321.80px;top:0.5px;font-size:6.75px;line-height:9.04px;color:#2c3e44;">Session Setup AndX Request, User: .\</span>
</div>
<div style="left:0;top:36.16px;width:705.4px;height:9.14px;background:#fdfed2;">
<span class="m" style="right:670.70px;top:0.5px;font-size:6.75px;line-height:9.04px;color:#2c3e44;">2242</span>
<span class="m" style="left:38.20px;top:0.5px;font-size:6.75px;line-height:9.04px;color:#2c3e44;">362.546097797</span>
<span class="m" style="left:94.80px;top:0.5px;font-size:6.75px;line-height:9.04px;color:#2c3e44;">192.168.2.69</span>
<span class="m" style="left:179.80px;top:0.5px;font-size:6.75px;line-height:9.04px;color:#2c3e44;">192.168.2.65</span>
<span class="m" style="left:264.80px;top:0.5px;font-size:6.75px;line-height:9.04px;color:#2c3e44;">SMB</span>
<span class="m" style="right:386.60px;top:0.5px;font-size:6.75px;line-height:9.04px;color:#2c3e44;">158</span>
<span class="m" style="left:321.80px;top:0.5px;font-size:6.75px;line-height:9.04px;color:#2c3e44;">Session Setup AndX Response</span>
</div>
<div style="left:0;top:45.20px;width:705.4px;height:9.14px;background:#fdfed2;">
<span class="m" style="right:670.70px;top:0.5px;font-size:6.75px;line-height:9.04px;color:#2c3e44;">2243</span>
<span class="m" style="left:38.20px;top:0.5px;font-size:6.75px;line-height:9.04px;color:#2c3e44;">362.548273812</span>
<span class="m" style="left:94.80px;top:0.5px;font-size:6.75px;line-height:9.04px;color:#2c3e44;">192.168.2.65</span>
<span class="m" style="left:179.80px;top:0.5px;font-size:6.75px;line-height:9.04px;color:#2c3e44;">192.168.2.69</span>
<span class="m" style="left:264.80px;top:0.5px;font-size:6.75px;line-height:9.04px;color:#2c3e44;">SMB</span>
<span class="m" style="right:386.60px;top:0.5px;font-size:6.75px;line-height:9.04px;color:#2c3e44;">140</span>
<span class="m" style="left:321.80px;top:0.5px;font-size:6.75px;line-height:9.04px;color:#2c3e44;">Tree Connect AndX Request, Path: \\192.168.2.69\IPC$</span>
</div>
<div style="left:0;top:54.24px;width:705.4px;height:9.14px;background:#fdfed2;">
<span class="m" style="right:670.70px;top:0.5px;font-size:6.75px;line-height:9.04px;color:#2c3e44;">2244</span>
<span class="m" style="left:38.20px;top:0.5px;font-size:6.75px;line-height:9.04px;color:#2c3e44;">362.551756869</span>
<span class="m" style="left:94.80px;top:0.5px;font-size:6.75px;line-height:9.04px;color:#2c3e44;">192.168.2.69</span>
<span class="m" style="left:179.80px;top:0.5px;font-size:6.75px;line-height:9.04px;color:#2c3e44;">192.168.2.65</span>
<span class="m" style="left:264.80px;top:0.5px;font-size:6.75px;line-height:9.04px;color:#2c3e44;">SMB</span>
<span class="m" style="right:386.60px;top:0.5px;font-size:6.75px;line-height:9.04px;color:#2c3e44;">116</span>
<span class="m" style="left:321.80px;top:0.5px;font-size:6.75px;line-height:9.04px;color:#2c3e44;">Tree Connect AndX Response</span>
</div>
<div style="left:0;top:63.28px;width:705.4px;height:9.14px;background:#fdfed2;">
<span class="m" style="right:670.70px;top:0.5px;font-size:6.75px;line-height:9.04px;color:#2c3e44;">2245</span>
<span class="m" style="left:38.20px;top:0.5px;font-size:6.75px;line-height:9.04px;color:#2c3e44;">362.554138332</span>
<span class="m" style="left:94.80px;top:0.5px;font-size:6.75px;line-height:9.04px;color:#2c3e44;">192.168.2.65</span>
<span class="m" style="left:179.80px;top:0.5px;font-size:6.75px;line-height:9.04px;color:#2c3e44;">192.168.2.69</span>
<span class="m" style="left:264.80px;top:0.5px;font-size:6.75px;line-height:9.04px;color:#2c3e44;">SMB</span>
<span class="m" style="right:386.60px;top:0.5px;font-size:6.75px;line-height:9.04px;color:#2c3e44;">163</span>
<span class="m" style="left:321.80px;top:0.5px;font-size:6.75px;line-height:9.04px;color:#2c3e44;">NT Create AndX Request, Path: \netlogon</span>
</div>
<div style="left:0;top:72.32px;width:705.4px;height:9.14px;background:#fdfed2;">
<span class="m" style="right:670.70px;top:0.5px;font-size:6.75px;line-height:9.04px;color:#2c3e44;">2246</span>
<span class="m" style="left:38.20px;top:0.5px;font-size:6.75px;line-height:9.04px;color:#2c3e44;">362.558266535</span>
<span class="m" style="left:94.80px;top:0.5px;font-size:6.75px;line-height:9.04px;color:#2c3e44;">192.168.2.69</span>
<span class="m" style="left:179.80px;top:0.5px;font-size:6.75px;line-height:9.04px;color:#2c3e44;">192.168.2.65</span>
<span class="m" style="left:264.80px;top:0.5px;font-size:6.75px;line-height:9.04px;color:#2c3e44;">SMB</span>
<span class="m" style="right:386.60px;top:0.5px;font-size:6.75px;line-height:9.04px;color:#2c3e44;">105</span>
<span class="m" style="left:321.80px;top:0.5px;font-size:6.75px;line-height:9.04px;color:#2c3e44;">NT Create AndX Response, FID: 0x0000, Error: STATUS_ACCESS_DENIED</span>
</div>
<div style="left:0;top:81.36px;width:705.4px;height:9.14px;background:#fdfed2;">
<span class="m" style="right:670.70px;top:0.5px;font-size:6.75px;line-height:9.04px;color:#2c3e44;">2247</span>
<span class="m" style="left:38.20px;top:0.5px;font-size:6.75px;line-height:9.04px;color:#2c3e44;">362.560163133</span>
<span class="m" style="left:94.80px;top:0.5px;font-size:6.75px;line-height:9.04px;color:#2c3e44;">192.168.2.65</span>
<span class="m" style="left:179.80px;top:0.5px;font-size:6.75px;line-height:9.04px;color:#2c3e44;">192.168.2.69</span>
<span class="m" style="left:264.80px;top:0.5px;font-size:6.75px;line-height:9.04px;color:#2c3e44;">SMB</span>
<span class="m" style="right:386.60px;top:0.5px;font-size:6.75px;line-height:9.04px;color:#2c3e44;">161</span>
<span class="m" style="left:321.80px;top:0.5px;font-size:6.75px;line-height:9.04px;color:#2c3e44;">NT Create AndX Request, Path: \lsarpc</span>
</div>
<div style="left:0;top:90.40px;width:705.4px;height:9.14px;background:#fdfed2;">
<span class="m" style="right:670.70px;top:0.5px;font-size:6.75px;line-height:9.04px;color:#2c3e44;">2248</span>
<span class="m" style="left:38.20px;top:0.5px;font-size:6.75px;line-height:9.04px;color:#2c3e44;">362.564390735</span>
<span class="m" style="left:94.80px;top:0.5px;font-size:6.75px;line-height:9.04px;color:#2c3e44;">192.168.2.69</span>
<span class="m" style="left:179.80px;top:0.5px;font-size:6.75px;line-height:9.04px;color:#2c3e44;">192.168.2.65</span>
<span class="m" style="left:264.80px;top:0.5px;font-size:6.75px;line-height:9.04px;color:#2c3e44;">SMB</span>
<span class="m" style="right:386.60px;top:0.5px;font-size:6.75px;line-height:9.04px;color:#2c3e44;">105</span>
<span class="m" style="left:321.80px;top:0.5px;font-size:6.75px;line-height:9.04px;color:#2c3e44;">NT Create AndX Response, FID: 0x0000, Error: STATUS_ACCESS_DENIED</span>
</div>
<div style="left:3.600px;top:0;width:0.700px;height:96.00px;background:#9a9c8c;"></div>
</div>
<div style="left:842.8px;top:119.6px;width:1.9px;height:13.6px;background:#e8e8ec;border-radius:1px;"></div>
<svg style="left:530px;top:165px" width="90" height="24" viewBox="530 165 90 24"><path d="M537.300 175.800L546.200 173L546.500 174.700L611.200 182L611.200 182.600L546.900 177.900L547.200 179.200Z" fill="#f02c2c"/></svg>
<div style="left:135.2px;top:219.8px;width:712px;height:56.8px;background:#21242d;"></div>
<div style="left:135.2px;top:276.6px;width:712px;height:60.4px;background:#272a36;"></div>
<svg style="left:138.600px;top:226.40px" width="4.400" height="4.400" viewBox="0 0 4.400 4.400"><rect x="0.300" y="0.300" width="3.800" height="3.800" rx="0.400" fill="#1b1d23" stroke="#555862" stroke-width="0.600"/><path d="M1.300 2.200h1.800M2.200 1.300v1.800" stroke="#4a4d56" stroke-width="0.400"/></svg>
<span class="m" style="left:145.6px;top:223.98px;font-size:6.75px;line-height:9.04px;color:#e4e6ea;">Frame 2232: 154 bytes on wire (1232 bits), 154 bytes captured (1232 bits) on interface eth0, id 0</span>
<svg style="left:138.600px;top:235.44px" width="4.400" height="4.400" viewBox="0 0 4.400 4.400"><rect x="0.300" y="0.300" width="3.800" height="3.800" rx="0.400" fill="#1b1d23" stroke="#555862" stroke-width="0.600"/><path d="M1.300 2.200h1.800M2.200 1.300v1.800" stroke="#4a4d56" stroke-width="0.400"/></svg>
<span class="m" style="left:145.6px;top:233.02px;font-size:6.75px;line-height:9.04px;color:#e4e6ea;">Ethernet II, Src: VMware_cd:9b:a5 (00:0c:29:cd:9b:a5), Dst: IntelCor_f0:02:d5 (40:ec:99:f0:02:d5)</span>
<svg style="left:138.600px;top:244.48px" width="4.400" height="4.400" viewBox="0 0 4.400 4.400"><rect x="0.300" y="0.300" width="3.800" height="3.800" rx="0.400" fill="#1b1d23" stroke="#555862" stroke-width="0.600"/><path d="M1.300 2.200h1.800M2.200 1.300v1.800" stroke="#4a4d56" stroke-width="0.400"/></svg>
<span class="m" style="left:145.6px;top:242.06px;font-size:6.75px;line-height:9.04px;color:#e4e6ea;">Internet Protocol Version 4, Src: 192.168.2.65, Dst: 192.168.2.69</span>
<svg style="left:138.600px;top:253.52px" width="4.400" height="4.400" viewBox="0 0 4.400 4.400"><rect x="0.300" y="0.300" width="3.800" height="3.800" rx="0.400" fill="#1b1d23" stroke="#555862" stroke-width="0.600"/><path d="M1.300 2.200h1.800M2.200 1.300v1.800" stroke="#4a4d56" stroke-width="0.400"/></svg>
<span class="m" style="left:145.6px;top:251.1px;font-size:6.75px;line-height:9.04px;color:#e4e6ea;">Transmission Control Protocol, Src Port: 42941, Dst Port: 445, Seq: 1, Ack: 1, Len: 88</span>
<svg style="left:138.600px;top:262.56px" width="4.400" height="4.400" viewBox="0 0 4.400 4.400"><rect x="0.300" y="0.300" width="3.800" height="3.800" rx="0.400" fill="#1b1d23" stroke="#555862" stroke-width="0.600"/><path d="M1.300 2.200h1.800M2.200 1.300v1.800" stroke="#4a4d56" stroke-width="0.400"/></svg>
<span class="m" style="left:145.6px;top:260.14px;font-size:6.75px;line-height:9.04px;color:#e4e6ea;">NetBIOS Session Service</span>
<svg style="left:138.600px;top:271.60px" width="4.400" height="4.400" viewBox="0 0 4.400 4.400"><rect x="0.300" y="0.300" width="3.800" height="3.800" rx="0.400" fill="#1b1d23" stroke="#555862" stroke-width="0.600"/><path d="M1.300 2.200h1.800M2.200 1.300v1.800" stroke="#4a4d56" stroke-width="0.400"/></svg>
<span class="m" style="left:145.6px;top:269.18px;font-size:6.75px;line-height:9.04px;color:#e4e6ea;">SMB (Server Message Block Protocol)</span>
<div style="left:135.2px;top:337px;width:712px;height:108px;background:#262a36;border:0.700px solid #6c6f7a;"></div>
<div style="left:135.9px;top:337.7px;width:22.8px;height:106.6px;background:#2d303b;"></div>
<div style="left:325.20000000000005px;top:366.88000000000005px;width:21.05px;height:7.7px;background:#2f7df6;"></div>
<div style="left:426.9px;top:366.88000000000005px;width:8.5px;height:7.7px;background:#2f7df6;"></div>
<span class="m" style="left:139.3px;top:337.69px;font-size:6.75px;line-height:7.62px;color:#767a86;">0000</span>
<span class="m" style="left:163.6px;top:337.69px;font-size:6.75px;line-height:7.62px;color:#eceef2;">40 ec 99 f0 02 d5 00 0c  29 cd 9b a5 08 00 45 00</span>
<span class="m" style="left:370.4px;top:337.69px;font-size:6.75px;line-height:7.62px;color:#eceef2;">@<i>·······</i> )<i>·····</i>E<i>·</i></span>
<span class="m" style="left:139.3px;top:345.31px;font-size:6.75px;line-height:7.62px;color:#767a86;">0010</span>
<span class="m" style="left:163.6px;top:345.31px;font-size:6.75px;line-height:7.62px;color:#eceef2;">00 8c 26 74 40 00 40 06  8e 21 c0 a8 02 41 c0 a8</span>
<span class="m" style="left:370.4px;top:345.31px;font-size:6.75px;line-height:7.62px;color:#eceef2;"><i>··</i>&amp;t@<i>·</i>@<i>·</i> <i>·</i>!<i>···</i>A<i>··</i></span>
<span class="m" style="left:139.3px;top:352.93px;font-size:6.75px;line-height:7.62px;color:#767a86;">0020</span>
<span class="m" style="left:163.6px;top:352.93px;font-size:6.75px;line-height:7.62px;color:#eceef2;">02 45 a7 bd 01 bd 70 17  68 3c 04 f0 f5 fd 80 18</span>
<span class="m" style="left:370.4px;top:352.93px;font-size:6.75px;line-height:7.62px;color:#eceef2;"><i>·</i>E<i>····</i>p<i>·</i> h&lt;<i>······</i></span>
<span class="m" style="left:139.3px;top:360.55px;font-size:6.75px;line-height:7.62px;color:#767a86;">0030</span>
<span class="m" style="left:163.6px;top:360.55px;font-size:6.75px;line-height:7.62px;color:#eceef2;">01 f6 86 55 00 00 01 01  08 0a 06 49 f3 3b 00 00</span>
<span class="m" style="left:370.4px;top:360.55px;font-size:6.75px;line-height:7.62px;color:#eceef2;"><i>···</i>U<i>····</i> <i>···</i>I<i>·</i>;<i>··</i></span>
<span class="m" style="left:139.3px;top:368.17px;font-size:6.75px;line-height:7.62px;color:#c8ccd4;">0040</span>
<span class="m" style="left:163.6px;top:368.17px;font-size:6.75px;line-height:7.62px;color:#eceef2;">00 00 00 00 00 54 ff 53  4d 42 72 00 00 00 00 18</span>
<span class="m" style="left:370.4px;top:368.17px;font-size:6.75px;line-height:7.62px;color:#eceef2;"><i>·····</i>T<i>·</i>S MBr<i>·····</i></span>
<span class="m" style="left:139.3px;top:375.79px;font-size:6.75px;line-height:7.62px;color:#767a86;">0050</span>
<span class="m" style="left:163.6px;top:375.79px;font-size:6.75px;line-height:7.62px;color:#eceef2;">01 28 00 00 00 00 00 00  00 00 00 00 00 00 00 00</span>
<span class="m" style="left:370.4px;top:375.79px;font-size:6.75px;line-height:7.62px;color:#eceef2;"><i>·</i>(<i>······</i> <i>········</i></span>
<span class="m" style="left:139.3px;top:383.41px;font-size:6.75px;line-height:7.62px;color:#767a86;">0060</span>
<span class="m" style="left:163.6px;top:383.41px;font-size:6.75px;line-height:7.62px;color:#eceef2;">21 a7 00 00 4c 80 00 31  00 02 4c 41 4e 4d 41 4e</span>
<span class="m" style="left:370.4px;top:383.41px;font-size:6.75px;line-height:7.62px;color:#eceef2;">!<i>···</i>L<i>··</i>1 <i>··</i>LANMAN</span>
<span class="m" style="left:139.3px;top:391.03px;font-size:6.75px;line-height:7.62px;color:#767a86;">0070</span>
<span class="m" style="left:163.6px;top:391.03px;font-size:6.75px;line-height:7.62px;color:#eceef2;">31 2e 30 00 02 4c 4d 31  2e 32 58 30 30 32 00 02</span>
<span class="m" style="left:370.4px;top:391.03px;font-size:6.75px;line-height:7.62px;color:#eceef2;">1.0<i>··</i>LM1 .2X002<i>··</i></span>
<span class="m" style="left:139.3px;top:398.65px;font-size:6.75px;line-height:7.62px;color:#767a86;">0080</span>
<span class="m" style="left:163.6px;top:398.65px;font-size:6.75px;line-height:7.62px;color:#eceef2;">4e 54 20 4c 41 4e 4d 41  4e 20 31 2e 30 00 02 4e</span>
<span class="m" style="left:370.4px;top:398.65px;font-size:6.75px;line-height:7.62px;color:#eceef2;">NT LANMA N 1.0<i>··</i>N</span>
<span class="m" style="left:139.3px;top:406.27px;font-size:6.75px;line-height:7.62px;color:#767a86;">0090</span>
<span class="m" style="left:163.6px;top:406.27px;font-size:6.75px;line-height:7.62px;color:#eceef2;">54 20 4c 4d 20 30 2e 31  32 00</span>
<span class="m" style="left:370.4px;top:406.27px;font-size:6.75px;line-height:7.62px;color:#eceef2;">T LM 0.1 2<i>·</i></span>
<div style="left:132.8px;top:445.2px;width:716px;height:13.8px;background:#20232c;"></div>
<svg style="left:138.600px;top:448.200px" width="20" height="7" viewBox="0 0 20 7"><circle cx="3.400" cy="3.400" r="2.900" fill="#e0434e"/><rect x="11.600" y="0.600" width="4.800" height="5.800" fill="#f0f0f0"/><path d="M12.600 4.800l2.400-2.600" stroke="#333" stroke-width="0.800"/><path d="M14 0.600h2.400v2" fill="#3a7be0"/></svg>
<span class="s" style="left:164.0px;top:447.52px;font-size:6.83px;line-height:9.56px;color:#f4f4f6;">Transmission Control Protocol: Protocol</span>
<span class="s" style="left:625.4px;top:447.75px;font-size:6.65px;line-height:9.31px;color:#f0f0f2;">分组: 14848 · 已显示: 834 (5.6%)</span>
<span class="s" style="left:790px;top:447.79px;font-size:6.3px;line-height:8.82px;color:#e8e8ec;">配置: Default</span>
<div style="left:-6px;top:459.2px;width:880px;height:8.8px;background:#f1f1f1;"></div>
<span class="s" style="left:1.2px;top:461.34px;font-size:5.37px;line-height:7.52px;color:#111;">要将输入定向到该虚拟机，请将鼠标指针移入其中或按</span>
<span class="s" style="left:131.8px;top:460.7px;font-size:6.0px;line-height:8.4px;color:#111;">Ctrl+G。</span>
<div style="left:-6px;top:468px;width:880px;height:10px;background:#1e2a33;"></div>
<div style="left:21.4px;top:468.3px;width:154.8px;height:9px;background:#dfe1e8;"></div>
<svg style="left:152px;top:468px" width="24" height="4" viewBox="0 0 24 4"><path d="M3 4l2-3 1 3z" fill="#d858d8"/><path d="M16 4l1.500-2.500 1.500 2.500z" fill="#f0c020"/></svg>
<svg style="left:830px;top:468.500px" width="14" height="3.500" viewBox="0 0 14 3.500"><path d="M1 3.500v-2M3 3.500v-2M5.500 3.500v-1.500M8 3.500v-2M10.500 3.500v-2" stroke="#e8e8e8" stroke-width="0.800"/></svg>
<svg style="left:783px;top:453.500px" width="82" height="15" viewBox="0 0 82 15">
<path d="M3.800 2.200l9.600-1.400c1.200-.1 2 .7 1.900 1.800l-.9 9.600c-.1 1.100-.9 1.800-2 1.900l-8.600.6c-1.200 0-1.900-.6-1.900-1.800z" fill="#f2601f"/>
<path d="M11 4.600c-2-1-5.200-.4-5 1.300.2 1.700 4.800.9 5 2.800.2 1.700-3.400 2.100-5.600.9" fill="none" stroke="#fff" stroke-width="1.300"/>
<g fill="none" stroke="#1a6fe0" stroke-width="1.100"><rect x="18.400" y="7" width="6.600" height="3.200"/><path d="M21.700 5.400v7"/></g>
<path d="M31.200 7.400l1.600 1.600M34 7.600c.4 1.400 0 2.600-1 3.400" stroke="#1a6fe0" stroke-width="1" fill="none"/>
<path d="M40.400 7.400h4.800l-2.400 3zM42.800 10.400v1.800" fill="#1a6fe0" stroke="#1a6fe0" stroke-width="0.800"/><path d="M41.400 5.800h2.800" stroke="#1a6fe0" stroke-width="0.800"/>
<rect x="50.400" y="6.600" width="7" height="5" rx="0.600" fill="#1a6fe0"/><path d="M51.600 8.200h4.600M51.600 9.800h4.600" stroke="#dfe8ff" stroke-width="0.500"/>
<path d="M61.300 6.200l2.400.8 1.300-.8 1.300.8 2.400-.8-.8 3h-1.100v3.200h-3.600v-3.200h-1.100z" fill="#1a6fe0"/>
<rect x="72.600" y="6.200" width="2.600" height="2.700" rx="0.500" fill="#1a6fe0"/><rect x="76" y="6.200" width="2.600" height="2.700" rx="0.500" fill="#1a6fe0"/><rect x="72.600" y="9.600" width="2.600" height="2.700" rx="0.500" fill="#1a6fe0"/><rect x="76" y="9.600" width="2.600" height="2.700" rx="0.500" fill="#1a6fe0"/>
</svg>
<span class="s" style="left:711.100px;top:441.700px;font-size:17px;line-height:22px;color:rgba(255,255,255,0.900);-webkit-text-stroke:0.450px rgba(70,70,70,0.600);text-shadow:0.400px 0.400px 0.600px rgba(0,0,0,0.350);">CSDN @流光拾贝</span>
</div></body></html>
